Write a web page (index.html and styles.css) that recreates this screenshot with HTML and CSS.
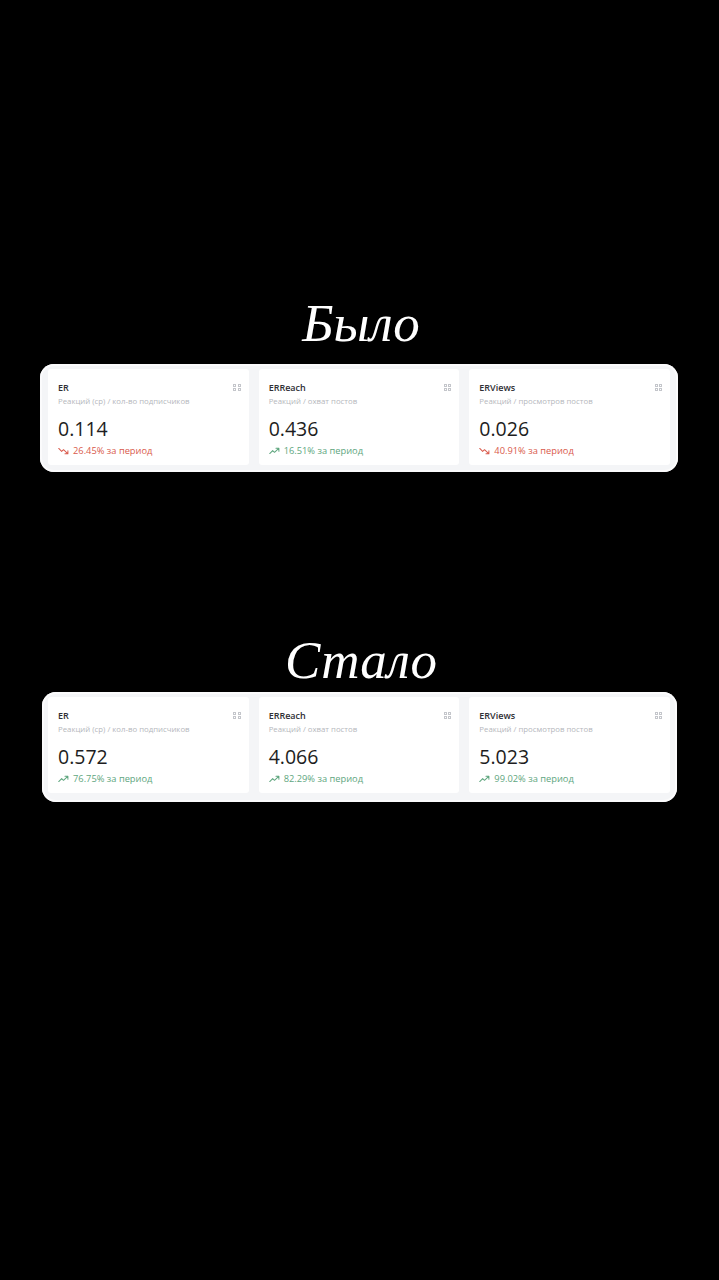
FILE: index.html
```html
<!DOCTYPE html>
<html lang="ru">
<head>
<meta charset="utf-8">
<title>Было / Стало</title>
<link rel="stylesheet" href="styles.css">
</head>
<body>
<main class="page">
  <h1 class="title title-first">Было</h1>
  <section class="panel">
    <div class="card">
      <div class="card-head"><span class="card-name">ER</span><span class="grip"><i></i><i></i><i></i><i></i></span></div>
      <div class="card-sub">Реакций (ср) / кол-во подписчиков</div>
      <div class="card-value">0.114</div>
      <div class="card-change down"><svg class="trend" viewBox="0 0 12 8"><path d="M0.8 1.2 L4 4.4 L6 2.6 L10.6 6.8 M7.6 7 H10.8 V3.8"/></svg>26.45% за период</div>
    </div>
    <div class="card">
      <div class="card-head"><span class="card-name">ERReach</span><span class="grip"><i></i><i></i><i></i><i></i></span></div>
      <div class="card-sub">Реакций / охват постов</div>
      <div class="card-value">0.436</div>
      <div class="card-change up"><svg class="trend" viewBox="0 0 12 8"><path d="M0.8 6.8 L4 3.6 L6 5.4 L10.6 1.2 M7.6 1 H10.8 V4.2"/></svg>16.51% за период</div>
    </div>
    <div class="card">
      <div class="card-head"><span class="card-name">ERViews</span><span class="grip"><i></i><i></i><i></i><i></i></span></div>
      <div class="card-sub">Реакций / просмотров постов</div>
      <div class="card-value">0.026</div>
      <div class="card-change down"><svg class="trend" viewBox="0 0 12 8"><path d="M0.8 1.2 L4 4.4 L6 2.6 L10.6 6.8 M7.6 7 H10.8 V3.8"/></svg>40.91% за период</div>
    </div>
  </section>

  <h1 class="title title-second">Стало</h1>
  <section class="panel panel-second">
    <div class="card">
      <div class="card-head"><span class="card-name">ER</span><span class="grip"><i></i><i></i><i></i><i></i></span></div>
      <div class="card-sub">Реакций (ср) / кол-во подписчиков</div>
      <div class="card-value">0.572</div>
      <div class="card-change up"><svg class="trend" viewBox="0 0 12 8"><path d="M0.8 6.8 L4 3.6 L6 5.4 L10.6 1.2 M7.6 1 H10.8 V4.2"/></svg>76.75% за период</div>
    </div>
    <div class="card">
      <div class="card-head"><span class="card-name">ERReach</span><span class="grip"><i></i><i></i><i></i><i></i></span></div>
      <div class="card-sub">Реакций / охват постов</div>
      <div class="card-value">4.066</div>
      <div class="card-change up"><svg class="trend" viewBox="0 0 12 8"><path d="M0.8 6.8 L4 3.6 L6 5.4 L10.6 1.2 M7.6 1 H10.8 V4.2"/></svg>82.29% за период</div>
    </div>
    <div class="card">
      <div class="card-head"><span class="card-name">ERViews</span><span class="grip"><i></i><i></i><i></i><i></i></span></div>
      <div class="card-sub">Реакций / просмотров постов</div>
      <div class="card-value">5.023</div>
      <div class="card-change up"><svg class="trend" viewBox="0 0 12 8"><path d="M0.8 6.8 L4 3.6 L6 5.4 L10.6 1.2 M7.6 1 H10.8 V4.2"/></svg>99.02% за период</div>
    </div>
  </section>
</main>
</body>
</html>
```
FILE: styles.css
```css
html, body {
  margin: 0;
  padding: 0;
  background: #000;
}
body {
  width: 719px;
  height: 1280px;
  overflow: hidden;
  font-family: "Open Sans", "Liberation Sans", sans-serif;
}
.page {
  padding: 0 41px 0 40px;
}
.title {
  margin: 0;
  height: 60px;
  line-height: 60px;
  text-align: center;
  color: #fff;
  font-family: "Liberation Serif", "DejaVu Serif", serif;
  font-style: italic;
  font-weight: normal;
  font-size: 53px;
}
.title-first {
  margin-top: 293px;
  margin-bottom: 11px;
  padding-left: 4px;
}
.title-second {
  margin-top: 158px;
  margin-bottom: 2px;
  padding-left: 4px;
}
.panel {
  display: grid;
  grid-template-columns: 1fr 1fr 1fr;
  gap: 10px;
  padding: 5px 8px 7px 8px;
  background: #f4f5f7;
  border-radius: 14px;
  box-shadow: inset 0 0 0 2px #fbfbfc;
}
.panel-second {
  margin: 0 1px 0 2px;
  padding: 5px 7px 9px 6px;
}
.card {
  background: #fff;
  border-radius: 3px;
  padding: 13px 8px 8px 10px;
}
.card-head {
  display: flex;
  justify-content: space-between;
  align-items: center;
  height: 12px;
}
.card-name {
  font-size: 9px;
  line-height: 12px;
  font-weight: 600;
  color: #2e2e33;
}
.grip {
  display: grid;
  grid-template-columns: 3px 3px;
  gap: 1.5px;
  margin-top: -1px;
}
.grip i {
  display: block;
  width: 3px;
  height: 3px;
  border: 0.9px solid #c4c6cb;
  box-sizing: border-box;
}
.card-sub {
  margin-top: 2px;
  font-size: 7.8px;
  line-height: 10px;
  color: #b5b7bc;
  white-space: nowrap;
}
.card-value {
  margin-top: 11px;
  font-size: 19.5px;
  line-height: 24px;
  font-weight: 500;
  color: #1d1d21;
}
.card-change {
  margin-top: 4px;
  display: flex;
  align-items: center;
  gap: 4px;
  font-size: 9.3px;
  line-height: 12px;
  font-weight: 500;
}
.card-change.down { color: #d95a4c; }
.card-change.up { color: #5ea67e; }
.trend {
  width: 11px;
  height: 8px;
  fill: none;
  stroke: currentColor;
  stroke-width: 1.1;
  stroke-linecap: round;
  stroke-linejoin: round;
}
```
